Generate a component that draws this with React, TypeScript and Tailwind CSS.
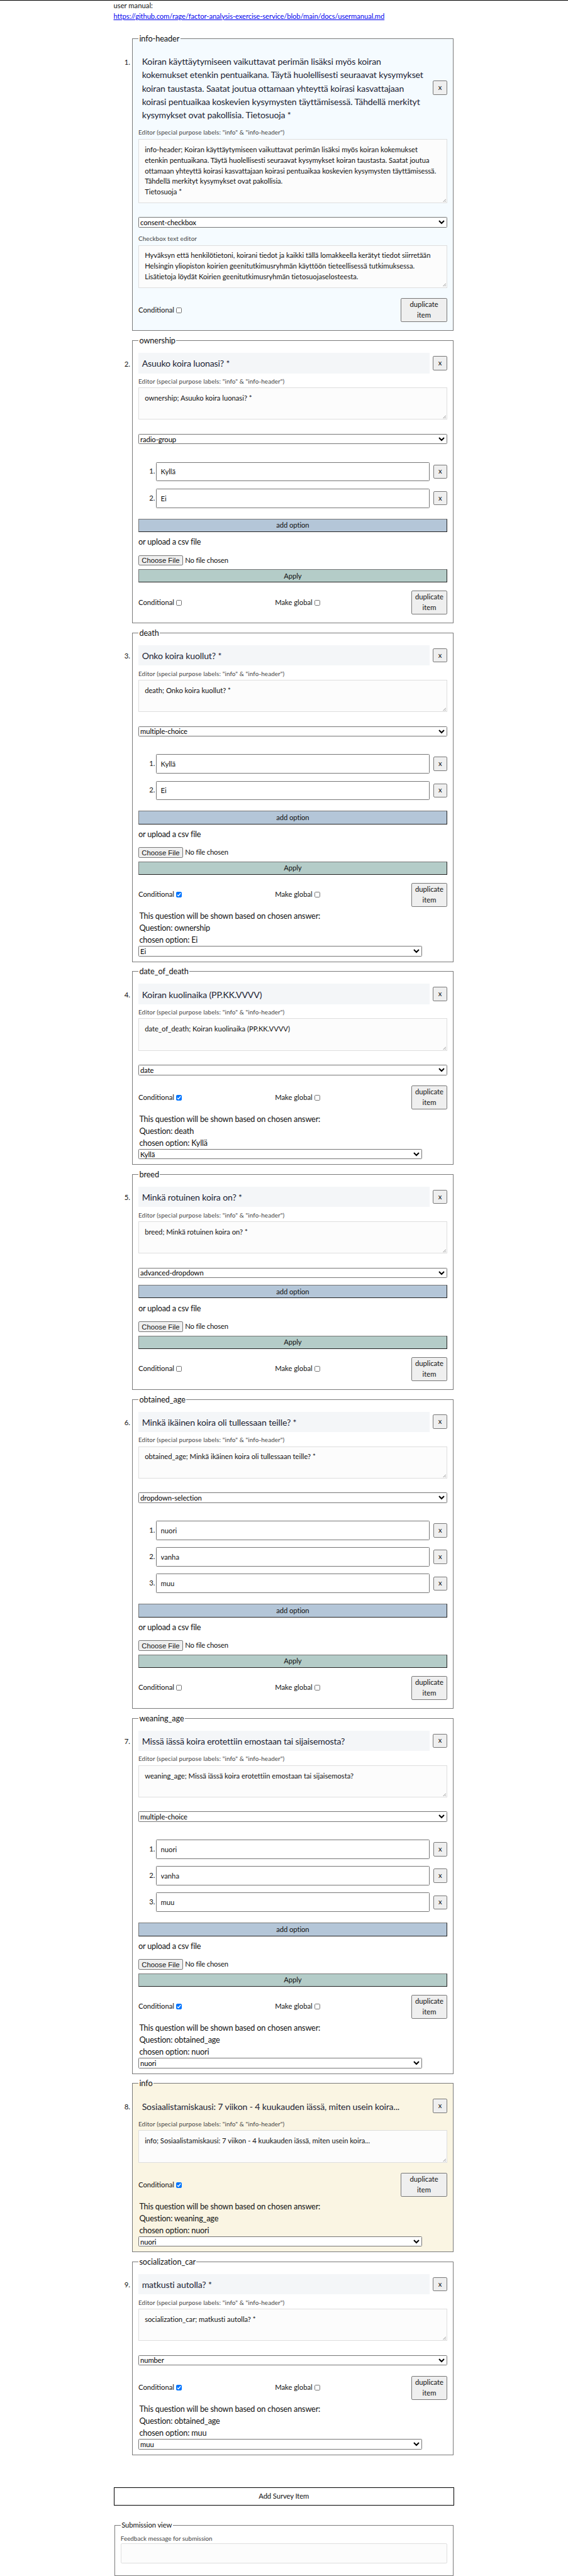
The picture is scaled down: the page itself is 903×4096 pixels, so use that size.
type Item = {
  label: string;
  title: string;
  text: string;
  textHeight: string;
  type?: string;
  consent?: string;
  options?: string[];
  variant?: "header" | "info";
  condition?: { question: string; option: string };
};

const SHORT = "h-[72.6px]";

const items: Item[] = [
  {
    label: "info-header",
    title:
      "Koiran käyttäytymiseen vaikuttavat perimän lisäksi myös koiran\nkokemukset etenkin pentuaikana. Täytä huolellisesti seuraavat kysymykset\nkoiran taustasta. Saatat joutua ottamaan yhteyttä koirasi kasvattajaan\nkoirasi pentuaikaa koskevien kysymysten täyttämisessä. Tähdellä merkityt\nkysymykset ovat pakollisia. Tietosuoja *",
    text: "info-header; Koiran käyttäytymiseen vaikuttavat perimän lisäksi myös koiran kokemukset\netenkin pentuaikana. Täytä huolellisesti seuraavat kysymykset koiran taustasta. Saatat joutua\nottamaan yhteyttä koirasi kasvattajaan koirasi pentuaikaa koskevien kysymysten täyttämisessä.\nTähdellä merkityt kysymykset ovat pakollisia.\nTietosuoja *",
    textHeight: "h-[144.7px]",
    type: "consent-checkbox",
    consent:
      "Hyväksyn että henkilötietoni, koirani tiedot ja kaikki tällä lomakkeella kerätyt tiedot siirretään\nHelsingin yliopiston koirien geenitutkimusryhmän käyttöön tieteellisessä tutkimuksessa.\nLisätietoja löydät Koirien geenitutkimusryhmän tietosuojaselosteesta.",
    variant: "header",
  },
  {
    label: "ownership",
    title: "Asuuko koira luonasi? *",
    text: "ownership; Asuuko koira luonasi? *",
    textHeight: SHORT,
    type: "radio-group",
    options: ["Kyllä", "Ei"],
  },
  {
    label: "death",
    title: "Onko koira kuollut? *",
    text: "death; Onko koira kuollut? *",
    textHeight: SHORT,
    type: "multiple-choice",
    options: ["Kyllä", "Ei"],
    condition: { question: "ownership", option: "Ei" },
  },
  {
    label: "date_of_death",
    title: "Koiran kuolinaika (PP.KK.VVVV)",
    text: "date_of_death; Koiran kuolinaika (PP.KK.VVVV)",
    textHeight: SHORT,
    type: "date",
    condition: { question: "death", option: "Kyllä" },
  },
  {
    label: "breed",
    title: "Minkä rotuinen koira on? *",
    text: "breed; Minkä rotuinen koira on? *",
    textHeight: SHORT,
    type: "advanced-dropdown",
    options: [],
  },
  {
    label: "obtained_age",
    title: "Minkä ikäinen koira oli tullessaan teille? *",
    text: "obtained_age; Minkä ikäinen koira oli tullessaan teille? *",
    textHeight: SHORT,
    type: "dropdown-selection",
    options: ["nuori", "vanha", "muu"],
  },
  {
    label: "weaning_age",
    title: "Missä iässä koira erotettiin emostaan tai sijaisemosta?",
    text: "weaning_age; Missä iässä koira erotettiin emostaan tai sijaisemosta?",
    textHeight: SHORT,
    type: "multiple-choice",
    options: ["nuori", "vanha", "muu"],
    condition: { question: "obtained_age", option: "nuori" },
  },
  {
    label: "info",
    title: "Sosiaalistamiskausi: 7 viikon - 4 kuukauden iässä, miten usein koira...",
    text: "info; Sosiaalistamiskausi: 7 viikon - 4 kuukauden iässä, miten usein koira...",
    textHeight: SHORT,
    variant: "info",
    condition: { question: "weaning_age", option: "nuori" },
  },
  {
    label: "socialization_car",
    title: "matkusti autolla? *",
    text: "socialization_car; matkusti autolla? *",
    textHeight: SHORT,
    type: "number",
    condition: { question: "obtained_age", option: "muu" },
  },
];

function RemoveButton({ wide }: { wide?: boolean }) {
  return (
    <button
      className={`${wide ? "w-[32px]" : "w-[31px]"} h-[32px] shrink-0 rounded-[3px] border border-[#767676] bg-[#efefef] leading-[24px]`}
    >
      x
    </button>
  );
}

function Editor({ label, text, height }: { label: string; text: string; height: string }) {
  return (
    <label className="block">
      <span className="flex h-[32px] items-center pt-[4px] text-[14px] tracking-[0.165px] text-[#444]">{label}</span>
      <span className="relative block">
        <textarea
          readOnly
          wrap="off"
          value={text}
          className={`${height} block w-full resize-none overflow-hidden border border-[#dedede] bg-[#fcfcfc] pt-[11.3px] pl-[13px] text-[16px] leading-[24px] tracking-[-0.04px] outline-none`}
        />
        <svg viewBox="0 0 8 8" className="absolute right-[2px] bottom-[2px] size-[8px]" stroke="#555" strokeWidth="0.9" fill="none">
          <path d="M0.5 7.5 7.5 0.5M4.5 7.5 7.5 4.5" />
        </svg>
      </span>
    </label>
  );
}

function Select({ value, className }: { value: string; className: string }) {
  return (
    <select
      defaultValue={value}
      className={`${className} block h-[23.2px] rounded-[2px] border border-[#767676] bg-white pl-0 text-[16px] leading-[20px] tracking-[-0.1px] text-black`}
    >
      <option>{value}</option>
    </select>
  );
}

function BarButton({ children, color }: { children: string; color: string }) {
  return (
    <button
      className={`${color} block h-[30px] w-full border-2 border-t-[#767676] border-r-[#212121] border-b-[#212121] border-l-[#767676] text-center leading-[20px] tracking-[-0.1px]`}
    >
      {children}
    </button>
  );
}

function Options({ options }: { options: string[] }) {
  return (
    <div>
      {options.length > 0 && (
        <ol className="flex flex-col gap-[16.3px] pt-[24px] pb-[24.3px]">
          {options.map((option, i) => (
            <li key={option} className="flex items-center">
              <span className="w-[40px] pr-[2.5px] text-right">{i + 1}.</span>
              <input
                readOnly
                value={option}
                className="mr-[8px] h-[43.7px] w-[617px] rounded-[2px] border border-[#767676] bg-white px-[9px] text-[16px] outline-none"
              />
              <RemoveButton />
            </li>
          ))}
        </ol>
      )}
      <BarButton color="bg-[#b4c6d8]">add option</BarButton>
      <div className="h-[52px] pt-[9px] text-[18px] leading-[27px] tracking-[-0.3px]">or upload a csv file</div>
      <div className="mb-[8px] flex h-[24px] items-center gap-[5px]">
        <button className="h-[24px] w-[100.5px] rounded-[3px] border border-[#767676] bg-[#efefef] font-['Liberation_Sans',sans-serif] text-[16px] leading-[20px]">
          Choose File
        </button>
        <span className="tracking-[-0.25px]">No file chosen</span>
      </div>
      <BarButton color="bg-[#b4ccc8]">Apply</BarButton>
    </div>
  );
}

function Check({ label, checked }: { label: string; checked?: boolean }) {
  return (
    <label className="flex w-[308px] items-center gap-[4.5px]">
      <span>{label}</span>
      <span
        role="checkbox"
        aria-checked={!!checked}
        className={`${checked ? "border-[#0075ff] bg-[#0075ff]" : "border-[#767676] bg-white"} flex size-[13px] items-center justify-center rounded-[2.5px] border`}
      >
        {checked && (
          <svg viewBox="0 0 10 10" className="size-[10px]" fill="none" stroke="white" strokeWidth="1.9">
            <path d="M1.2 5.2 3.8 7.8 8.8 1.8" />
          </svg>
        )}
      </span>
    </label>
  );
}

function SurveyItem({ item, index }: { item: Item; index: number }) {
  const panel =
    item.variant === "header" ? "bg-[#f5fbff]" : item.variant === "info" ? "bg-[#faf5e3]" : "bg-white";
  return (
    <li className="flex">
      <span className="w-[40px] shrink-0 pt-[50.4px] pr-[2.5px] text-right leading-[30px]">{index + 1}.</span>
      <fieldset
        className={`${panel} ml-[2px] w-[724px] shrink-0 border-[2px] border-[#7a7a7a] px-[12.6px] pt-[14.2px] ${item.condition ? "pb-[11.4px]" : "pb-[18.8px]"}`}
      >
        <legend className="h-[27px] px-[2px] text-[18px] leading-[27px] tracking-[-0.1px]">{item.label}</legend>
        <div className="flex items-center gap-[8px]">
          <h2
            className={`${item.variant ? "" : "bg-[#f4f6f8]"} w-[656px] px-[8px] pt-[8.7px] pb-[7.3px] text-[20px] leading-[30px] tracking-[-0.2px] whitespace-pre text-[#1a2333]`}
          >
            {item.title}
          </h2>
          <RemoveButton wide />
        </div>
        <Editor label={'Editor (special purpose labels: "info" & "info-header")'} text={item.text} height={item.textHeight} />
        {item.type && <Select value={item.type} className="mt-[32px] w-full" />}
        {item.consent && (
          <div className="pt-[7.5px]">
            <Editor label="Checkbox text editor" text={item.consent} height="h-[96.5px]" />
          </div>
        )}
        {item.options && (
          <div className="pt-[16px]">
            <Options options={item.options} />
          </div>
        )}
        <div className={`flex items-center ${item.options ? "mt-[18.4px]" : "mt-[24px]"}`}>
          <Check label="Conditional" checked={!!item.condition} />
          {!item.variant && <Check label="Make global" />}
          <button
            className={`${item.variant ? "w-[104px] px-[18px]" : "w-[80px]"} ml-auto h-[53.6px] rounded-[3px] border border-[#767676] bg-[#efefef] leading-[24px]`}
          >
            duplicate
            <br />
            item
          </button>
        </div>
        {item.condition && (
          <div className="pt-[7.5px]">
            <div className="pl-[2px] text-[18px] leading-[27.1px] tracking-[-0.24px]">
              <p>This question will be shown based on chosen answer:</p>
              <p>Question: {item.condition.question}</p>
              <p>chosen option: {item.condition.option}</p>
            </div>
            <Select value={item.condition.option} className="w-[640px]" />
          </div>
        )}
      </fieldset>
    </li>
  );
}

export default function App() {
  return (
    <div className="bg-white font-['Lato',sans-serif] text-[16px] leading-[24px] text-[#111] [zoom:0.7051]">
      <div className="h-[1.5px] bg-black" />
      <main className="ml-[256px] w-[768px]">
        <p>user manual:</p>
        <a href="#" className="block w-fit tracking-[-0.14px] text-[#0000ee] underline">
          https://github.com/rage/factor-analysis-exercise-service/blob/main/docs/usermanual.md
        </a>
        <ol className="flex flex-col gap-[8.1px] pt-[24.4px]">
          {items.map((item, i) => (
            <SurveyItem key={item.label} item={item} index={i} />
          ))}
        </ol>
        <button className="mt-[72.5px] block h-[41.7px] w-full border border-black bg-white tracking-[-0.14px]">
          Add Survey Item
        </button>
        <fieldset className="mx-[2px] mt-[32px] border-[2px] border-[#7a7a7a] px-[12.6px] pb-[26.3px]">
          <legend className="h-[24px] px-[2px] leading-[24px] tracking-[-0.14px]">Submission view</legend>
          <div className="flex h-[28.5px] items-end pb-[1px] text-[14px] leading-[20px] text-[#444]">
            Feedback message for submission
          </div>
          <div className="h-[46px] rounded-[3px] border border-[#dedede] bg-[#fcfcfc]" />
        </fieldset>
      </main>
    </div>
  );
}
